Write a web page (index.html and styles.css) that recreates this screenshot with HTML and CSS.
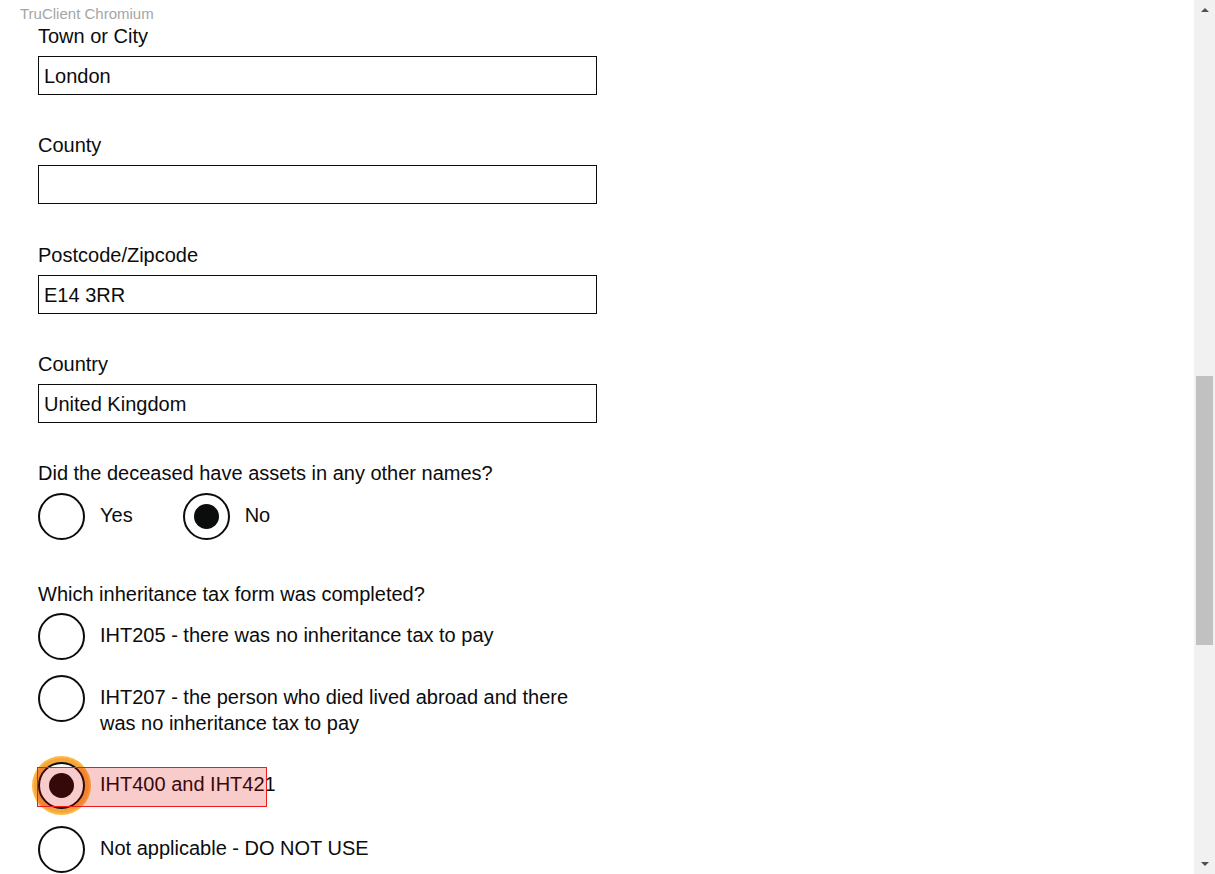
FILE: index.html
```html
<!DOCTYPE html>
<html lang="en">
<head>
<meta charset="utf-8">
<title>Form</title>
<link rel="stylesheet" href="styles.css">
</head>
<body>
<div class="watermark">TruClient Chromium</div>
<main class="page">
  <div class="form-group">
    <label class="label">Town or City</label>
    <div class="input">London</div>
  </div>
  <div class="form-group">
    <label class="label">County</label>
    <div class="input"></div>
  </div>
  <div class="form-group">
    <label class="label">Postcode/Zipcode</label>
    <div class="input">E14 3RR</div>
  </div>
  <div class="form-group">
    <label class="label">Country</label>
    <div class="input">United Kingdom</div>
  </div>

  <fieldset class="fieldset fieldset-inline">
    <legend class="legend">Did the deceased have assets in any other names?</legend>
    <div class="radios inline">
      <div class="radio-item">
        <span class="radio"></span>
        <span class="radio-label">Yes</span>
      </div>
      <div class="radio-item">
        <span class="radio checked"></span>
        <span class="radio-label">No</span>
      </div>
    </div>
  </fieldset>

  <fieldset class="fieldset">
    <legend class="legend">Which inheritance tax form was completed?</legend>
    <div class="radios">
      <div class="radio-item">
        <span class="radio"></span>
        <span class="radio-label">IHT205 - there was no inheritance tax to pay</span>
      </div>
      <div class="radio-item">
        <span class="radio"></span>
        <span class="radio-label">IHT207 - the person who died lived abroad and there was no inheritance tax to pay</span>
      </div>
      <div class="radio-item focused">
        <span class="radio checked focus"></span>
        <span class="radio-label">IHT400 and IHT421</span>
        <span class="highlight"></span>
      </div>
      <div class="radio-item">
        <span class="radio"></span>
        <span class="radio-label">Not applicable - DO NOT USE</span>
      </div>
    </div>
  </fieldset>
</main>
<aside class="scrollbar">
  <span class="arrow up"></span>
  <div class="track">
    <div class="thumb"></div>
  </div>
  <span class="arrow down"></span>
</aside>
</body>
</html>
```
FILE: styles.css
```css
html, body {
  margin: 0;
  padding: 0;
  height: 874px;
  overflow: hidden;
  background: #fff;
}
body {
  display: flex;
  font-family: "Liberation Sans", Arial, sans-serif;
  color: #0b0c0c;
  position: relative;
}
.watermark {
  position: absolute;
  left: 20px;
  top: 5px;
  font-size: 15px;
  line-height: 18px;
  color: #a6a6a6;
}
.page {
  flex: 1;
  padding: 24px 0 0 38px;
}
.form-group {
  width: 559px;
  margin-bottom: 38.3px;
}
.label {
  display: block;
  font-size: 20px;
  line-height: 25px;
  margin-bottom: 7px;
}
.input {
  box-sizing: border-box;
  height: 39px;
  border: 1.5px solid #0b0c0c;
  padding: 1px 5px 0;
  font-size: 20px;
  line-height: 36px;
}
.fieldset {
  border: 0;
  margin: 0 0 42px 0;
  padding: 0;
  width: 559px;
}
.fieldset-inline {
  margin-top: 1.5px;
}
.legend {
  padding: 0;
  font-size: 20px;
  line-height: 25px;
  margin-bottom: 6.5px;
}
.radios {
  display: flex;
  flex-direction: column;
  gap: 15px;
}
.radios.inline {
  flex-direction: row;
  gap: 50px;
}
.radio-item {
  display: flex;
  align-items: flex-start;
  position: relative;
}
.radio-item.focused {
  margin-bottom: 1.5px;
}
.radio {
  box-sizing: border-box;
  flex: none;
  width: 47px;
  height: 47px;
  border: 2px solid #0b0c0c;
  border-radius: 50%;
  background: #fff;
  display: flex;
  align-items: center;
  justify-content: center;
}
.radio.checked::after {
  content: "";
  width: 25px;
  height: 25px;
  border-radius: 50%;
  background: #0b0c0c;
}
.radio.focus {
  box-shadow: 0 0 0 4px #f6a53d, 0 0 0 6px #fbba45;
}
.radio-label {
  padding: 9px 0 11px 15px;
  font-size: 20px;
  line-height: 26px;
}
.highlight {
  position: absolute;
  left: -1px;
  top: 5px;
  width: 230px;
  height: 40px;
  box-sizing: border-box;
  border: 1px solid #ee1c1c;
  background: rgba(225, 0, 0, 0.2);
}
.scrollbar {
  flex: none;
  width: 21px;
  height: 874px;
  background: #f1f1f1;
  display: flex;
  flex-direction: column;
  align-items: center;
}
.arrow {
  flex: none;
  width: 0;
  height: 0;
  border-left: 4.5px solid transparent;
  border-right: 4.5px solid transparent;
}
.arrow.up {
  margin-top: 8px;
  border-bottom: 4.5px solid #505050;
}
.arrow.down {
  margin-bottom: 8px;
  border-top: 4.5px solid #505050;
}
.track {
  flex: 1;
  align-self: stretch;
  padding: 364px 2px 0 2px;
}
.thumb {
  height: 269px;
  background: #c1c1c1;
}
```
